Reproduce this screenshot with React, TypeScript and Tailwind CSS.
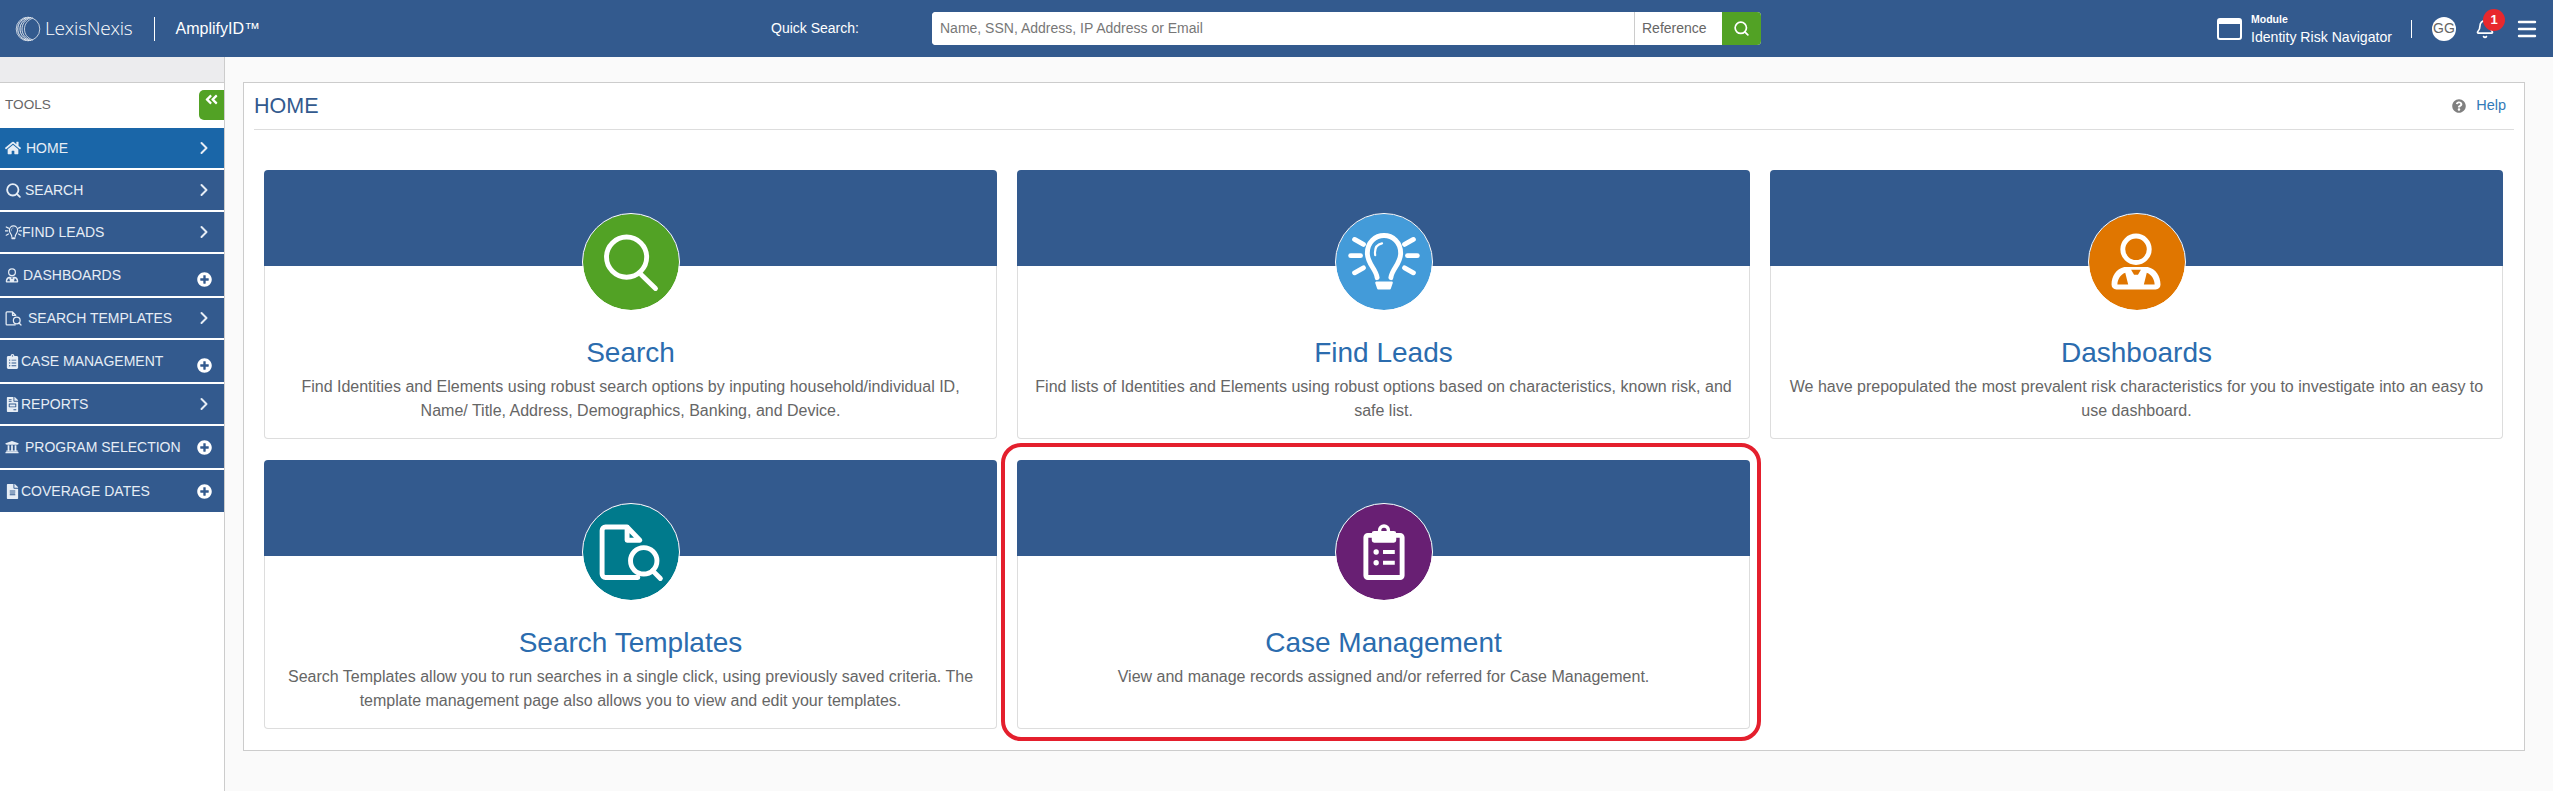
import React from 'react';
import { Bell, ChevronRight, Menu, Search } from 'lucide-react';
import {
  FaAngleDoubleLeft,
  FaClipboardList,
  FaFileAlt,
  FaFileInvoice,
  FaHome,
  FaPlusCircle,
  FaQuestionCircle,
  FaUniversity,
} from 'react-icons/fa';

type IconProps = { className?: string; box?: string };

// all of these sit on a 98x98 box, the same box as the round badge on the cards.
// the sidebar passes a tighter box so the small versions fill their space
const LensIcon = ({ className, box = '0 0 98 98' }: IconProps) => (
  <svg viewBox={box} className={className} fill="none" stroke="currentColor" strokeWidth="5" strokeLinecap="round">
    <circle cx="44.5" cy="44" r="20.5" />
    <path d="M59.5 62 L74 76" />
  </svg>
);

const BulbIcon = ({ className, box = '0 0 98 98' }: IconProps) => (
  <svg viewBox={box} className={className} fill="none" stroke="currentColor" strokeWidth="5" strokeLinecap="round" strokeLinejoin="round">
    <path d="M42 65 C41 56 32 51 32 40 C32 29 40 22 49 22 C58 22 66 29 66 40 C66 51 57 56 56 65" />
    <path d="M40 42 C39 35 42 31 47 30" strokeWidth="2.2" />
    <path d="M41 70 H57 L55 76 H43 Z" fill="currentColor" strokeWidth="2" />
    <path d="M15 42.5 H25 M73 42.5 H83 M19 26 L28 31 M79 26 L70 31 M19 60 L28 55 M79 60 L70 55" />
  </svg>
);

const PersonIcon = ({ className, box = '0 0 98 98' }: IconProps) => (
  <svg viewBox={box} className={className} fill="none">
    <circle cx="48" cy="36" r="13.5" stroke="currentColor" strokeWidth="5" />
    <path
      fill="currentColor"
      fillRule="evenodd"
      d="M36 54 H60 C68 56 73 63 73 72 C73 75 71 77 68 77 H28 C25 77 23 75 23 72 C23 63 28 56 36 54 Z M37 60 C32 62 29 67 29 72 H40 Z M59 60 L56 72 H67 C67 67 64 62 59 60 Z M43 57 L46 62 H50 L53 57 Z"
    />
  </svg>
);

const DocSearchIcon = ({ className, box = '0 0 98 98' }: IconProps) => (
  <svg viewBox={box} className={className} fill="none" stroke="currentColor" strokeWidth="5" strokeLinecap="round" strokeLinejoin="round">
    <path d="M56 75 H23 C21 75 19.5 73.5 19.5 71.5 V27 C19.5 25 21 23.5 23 23.5 H45 L58 37 H45 V23.5" />
    <circle cx="62" cy="58" r="13.5" />
    <path d="M71 68 L79 76" />
  </svg>
);

const ClipboardIcon = ({ className }: IconProps) => (
  <svg viewBox="0 0 98 98" className={className} fill="none" stroke="currentColor" strokeWidth="5" strokeLinecap="round" strokeLinejoin="round">
    <rect x="30.5" y="32" width="37" height="43" rx="2" />
    <path d="M39 30 H59 V37 H39 Z" fill="currentColor" />
    <circle cx="49" cy="27" r="4.5" strokeWidth="3.5" />
    <circle cx="41" cy="49" r="1.5" fill="currentColor" strokeWidth="2.5" />
    <circle cx="41" cy="60" r="1.5" fill="currentColor" strokeWidth="2.5" />
    <path d="M48 49 H60 M48 60 H60" strokeWidth="4" strokeLinecap="butt" />
  </svg>
);

const GlobeLogo = () => (
  <svg viewBox="0 0 26 26" className="h-[26px] w-[26px] text-white" fill="none" stroke="currentColor">
    <circle cx="13" cy="13" r="11.8" strokeWidth="0.7" />
    <path d="M14 1.5 C8 4 5 8 5 13 C5 18 8 22 14 24.5" strokeWidth="0.9" />
    <path d="M16 1.5 C10 4 7 8 7 13 C7 18 10 22 16 24.5" strokeWidth="0.8" />
    <path d="M18 2 C12 4.5 9.5 8.5 9.5 13 C9.5 18 12 22 18 24" strokeWidth="0.7" />
    <path d="M11 1.8 C5 4.5 2.8 8.5 2.8 13 C2.8 17.5 5 21.5 11 24.2" strokeWidth="0.9" />
  </svg>
);

const PlusBadge = () => <FaPlusCircle className="text-[15px] text-white" />;
const Chevron = () => <ChevronRight className="h-[20px] w-[20px] text-[#e6edf5]" strokeWidth={2.4} />;

const navItems = [
  { label: 'HOME', icon: <FaHome className="text-[16px]" />, iconBox: 'w-[21px]', row: 'h-[40px] bg-[#1a66a8]', end: 'chevron' },
  { label: 'SEARCH', icon: <Search className="h-[17px] w-[17px]" strokeWidth={2.6} />, iconBox: 'w-[20px]', row: 'h-[40px] bg-[#335a8e]', end: 'chevron' },
  { label: 'FIND LEADS', icon: <BulbIcon box="14 18 70 62" className="h-[15px] w-[17px]" />, iconBox: 'w-[17px]', row: 'h-[40px] bg-[#335a8e]', end: 'chevron' },
  { label: 'DASHBOARDS', icon: <PersonIcon box="20 19 56 60" className="h-[15px] w-[14px]" />, iconBox: 'w-[18px]', row: 'h-[42px] bg-[#335a8e]', end: 'plus-low' },
  { label: 'SEARCH TEMPLATES', icon: <DocSearchIcon box="16 20 66 60" className="h-[15px] w-[17px]" />, iconBox: 'w-[23px]', row: 'h-[40px] bg-[#335a8e]', end: 'chevron' },
  { label: 'CASE MANAGEMENT', icon: <FaClipboardList className="text-[15px]" />, iconBox: 'w-[16px]', row: 'h-[42px] bg-[#335a8e]', end: 'plus-low' },
  { label: 'REPORTS', icon: <FaFileInvoice className="text-[15px]" />, iconBox: 'w-[16px]', row: 'h-[40px] bg-[#335a8e]', end: 'chevron' },
  { label: 'PROGRAM SELECTION', icon: <FaUniversity className="text-[14px]" />, iconBox: 'w-[20px]', row: 'h-[42px] bg-[#335a8e]', end: 'plus' },
  { label: 'COVERAGE DATES', icon: <FaFileAlt className="text-[15px]" />, iconBox: 'w-[16px]', row: 'h-[42px] bg-[#335a8e]', end: 'plus' },
];

const cards = [
  {
    title: 'Search',
    icon: <LensIcon className="h-full w-full" />,
    badge: 'bg-[#52a225]',
    lines: ['Find Identities and Elements using robust search options by inputing household/individual ID,', 'Name/ Title, Address, Demographics, Banking, and Device.'],
  },
  {
    title: 'Find Leads',
    icon: <BulbIcon className="h-full w-full" />,
    badge: 'bg-[#439bd9]',
    lines: ['Find lists of Identities and Elements using robust options based on characteristics, known risk, and', 'safe list.'],
  },
  {
    title: 'Dashboards',
    icon: <PersonIcon className="h-full w-full" />,
    badge: 'bg-[#e07600]',
    lines: ['We have prepopulated the most prevalent risk characteristics for you to investigate into an easy to', 'use dashboard.'],
  },
  {
    title: 'Search Templates',
    icon: <DocSearchIcon className="h-full w-full" />,
    badge: 'bg-[#007a8c]',
    lines: ['Search Templates allow you to run searches in a single click, using previously saved criteria. The', 'template management page also allows you to view and edit your templates.'],
  },
  {
    title: 'Case Management',
    icon: <ClipboardIcon className="h-full w-full" />,
    badge: 'bg-[#681f73]',
    lines: ['View and manage records assigned and/or referred for Case Management.'],
    marked: true,
  },
];

const Header = () => (
  <header className="flex h-[57px] shrink-0 items-center bg-[#335a8e] text-white">
    <div className="flex w-[771px] shrink-0 items-center pl-[15px]">
      <GlobeLogo />
      <span className="ml-[4px] font-['Open_Sans',sans-serif] text-[19px] font-light tracking-[-0.2px]">LexisNexis</span>
      <span className="mx-[21px] h-[24px] w-px bg-white" />
      <span className="text-[16px]">AmplifyID™</span>
    </div>
    <span className="w-[161px] shrink-0 text-[14px]">Quick Search:</span>
    <div className="flex h-[33px] w-[829px] shrink-0 overflow-hidden rounded-[4px] bg-white">
      <input
        readOnly
        placeholder="Name, SSN, Address, IP Address or Email"
        className="min-w-0 flex-1 bg-white pl-[8px] text-[14px] text-[#555] outline-none placeholder:text-[#777]"
      />
      <div className="flex w-[88px] items-center border-l border-[#ccc] pl-[7px] text-[14px] text-[#666]">Reference</div>
      <div className="flex w-[39px] items-center justify-center bg-[#52a225]">
        <Search className="h-[17px] w-[17px] text-white" strokeWidth={2.4} />
      </div>
    </div>
    <div className="ml-[456px] h-[22px] w-[25px] shrink-0 rounded-[3px] border-x-[2px] border-b-[2px] border-t-[6px] border-white bg-[#335a8e]" />
    <div className="ml-[9px] flex w-[160px] shrink-0 flex-col">
      <span className="text-[10.5px] font-bold leading-[14px]">Module</span>
      <span className="mt-[2px] text-[14.1px] leading-[18px]">Identity Risk Navigator</span>
    </div>
    <span className="h-[18px] w-px shrink-0 bg-white" />
    <div className="ml-[20px] flex h-[24px] w-[24px] shrink-0 items-center justify-center rounded-full bg-white text-[14px] text-[#666]">GG</div>
    <div className="relative ml-[19px] shrink-0">
      <Bell className="h-[20px] w-[20px]" strokeWidth={2} />
      <span className="absolute left-[8px] top-[-10px] flex h-[22px] w-[22px] items-center justify-center rounded-full bg-[#e8282d] text-[13px] font-bold">1</span>
    </div>
    <Menu className="ml-[20px] h-[24px] w-[24px] shrink-0" strokeWidth={2.4} />
  </header>
);

const Sidebar = () => (
  <aside className="w-[225px] shrink-0 border-r border-[#ccc] bg-white">
    <div className="h-[26px] border-b border-[#ccc] bg-[#ececee]" />
    <div className="flex h-[45px] items-start justify-between pl-[5px]">
      <span className="mt-[12px] text-[13.6px] text-[#666]">TOOLS</span>
      <button className="mt-[7px] flex h-[30px] w-[25px] items-start justify-center rounded-l-[5px] bg-[#52a225] pt-[2px] text-white">
        <FaAngleDoubleLeft className="text-[15px]" />
      </button>
    </div>
    <nav className="flex flex-col gap-[2px]">
      {navItems.map((item) => (
        <div key={item.label} className={`flex items-center pl-[5px] text-[14px] text-[#e6edf5] ${item.row}`}>
          <span className={`flex shrink-0 items-center ${item.iconBox}`}>{item.icon}</span>
          <span className="flex-1 whitespace-nowrap">{item.label}</span>
          <span className={`flex w-[41px] shrink-0 justify-center pl-[1px] ${item.end === 'plus-low' ? 'mt-[8px]' : ''}`}>
            {item.end === 'chevron' ? <Chevron /> : <PlusBadge />}
          </span>
        </div>
      ))}
    </nav>
  </aside>
);

const Card = ({ card }: { card: (typeof cards)[number] }) => (
  <div className="relative flex flex-col">
    <div className="h-[96px] rounded-t-[4px] bg-[#335a8e]" />
    <div className="flex-1 rounded-b-[4px] border border-t-0 border-[#ddd] bg-white pt-[71px] text-center">
      <h3 className="text-[28px] leading-[32px] text-[#2b6cae]">{card.title}</h3>
      <p className="mt-[6px] text-[16px] leading-[24px] text-[#666]">
        {card.lines.map((line) => (
          <span key={line} className="block whitespace-nowrap">{line}</span>
        ))}
      </p>
    </div>
    <div className={`absolute left-1/2 top-[44px] h-[96px] w-[96px] -translate-x-1/2 rounded-full text-white outline-[1.5px] outline-white ${card.badge}`}>
      {card.icon}
    </div>
    {card.marked && (
      <div className="pointer-events-none absolute bottom-[-12px] left-[-16px] right-[-11px] top-[-17px] rounded-[20px] border-[4px] border-[#e41f2d]" />
    )}
  </div>
);

const App: React.FC = () => {
  return (
    <div className="flex h-[791px] flex-col overflow-hidden bg-[#fafafa] font-['Liberation_Sans',Arial,sans-serif]">
      <Header />
      <div className="flex flex-1">
        <Sidebar />
        <main className="flex-1 pl-[18px] pr-[28px] pt-[25px]">
          <section className="h-[669px] border border-[#ccc] bg-white">
            <div className="mx-[10px] flex h-[47px] items-center justify-between border-b border-[#ddd] pr-[8px]">
              <h1 className="text-[21.5px] text-[#335a8e]">HOME</h1>
              <div className="flex items-center gap-[10px] text-[14.5px] text-[#337ab7]">
                <FaQuestionCircle className="text-[14px] text-[#808080]" />
                Help
              </div>
            </div>
            <div className="mt-[40px] grid grid-cols-3 grid-rows-[269px_269px] gap-x-[20px] gap-y-[21px] pl-[20px] pr-[21px]">
              {cards.map((card) => (
                <Card key={card.title} card={card} />
              ))}
            </div>
          </section>
        </main>
      </div>
    </div>
  );
};

export default App;
